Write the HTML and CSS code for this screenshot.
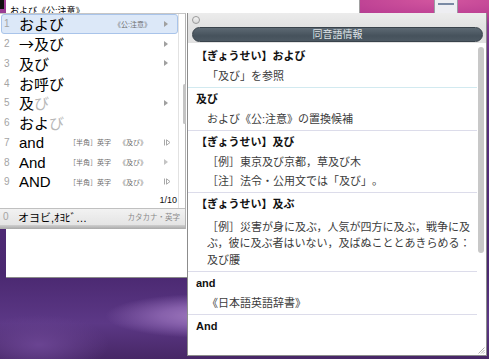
FILE: index.html
```html
<!DOCTYPE html>
<html lang="ja">
<head>
    <meta charset="UTF-8">
    <title>同音語情報</title>
    <link rel="stylesheet" href="styles.css">
</head>
<body>
<div class="desktop">
    <div class="desk-icon"><span></span></div>

    <div class="doc">
        <span class="inline-input">および《公:注意》</span>
    </div>
    <div class="caret"></div>

    <!-- candidate list -->
    <div class="cands">
        <div class="cand-body">
            <div class="cand-list">
                <div class="cand selected"><span class="num">1</span><span class="word">および</span><span class="note">《公:注意》</span><span class="more"><i class="tri"></i></span></div>
                <div class="cand"><span class="num">2</span><span class="word"><span class="cjk">→</span>及び</span><span class="more"><i class="tri"></i></span></div>
                <div class="cand"><span class="num">3</span><span class="word">及び</span><span class="more"><i class="tri"></i></span></div>
                <div class="cand"><span class="num">4</span><span class="word">お呼び</span></div>
                <div class="cand"><span class="num">5</span><span class="word">及<em>び</em></span><span class="more"><i class="tri"></i></span></div>
                <div class="cand"><span class="num">6</span><span class="word">およ<em>び</em></span></div>
                <div class="cand en"><span class="num">7</span><span class="word">and</span><span class="tag">［半角］英字</span><span class="tag">《及び》</span><span class="more"><svg width="7" height="7" viewBox="0 0 7 7"><path d="M0.5 0.5V6.5M2.5 0.8L6 3.5L2.5 6.2Z" fill="none" stroke="#a8a8a8"/></svg></span></div>
                <div class="cand en"><span class="num">8</span><span class="word">And</span><span class="tag">［半角］英字</span><span class="tag">《及び》</span><span class="more"><i class="tri light"></i></span></div>
                <div class="cand en"><span class="num">9</span><span class="word">AND</span><span class="tag">［半角］英字</span><span class="tag">《及び》</span><span class="more"><svg width="7" height="7" viewBox="0 0 7 7"><path d="M0.5 0.5V6.5M2.5 0.8L6 3.5L2.5 6.2Z" fill="none" stroke="#a8a8a8"/></svg></span></div>
                <div class="page">1/10</div>
            </div>
            <div class="cand-scroll"><span class="thumb"></span></div>
        </div>
        <div class="zero"><span class="num">0</span><span class="word">オヨビ,ｵﾖﾋﾞ…</span><span class="kind">カタカナ・英字</span></div>
        <div class="shade"></div>
    </div>

    <!-- homonym info window -->
    <div class="info">
        <div class="info-title"><span class="close"></span></div>
        <div class="info-head"><div class="pill">同音語情報</div></div>
        <div class="info-content">
            <div class="entries">
                <div class="entry first">
                    <div class="term">【ぎょうせい】および</div>
                    <div class="line">「及び」を参照</div>
                </div>
                <div class="entry">
                    <div class="term">及び</div>
                    <div class="line">および《公:注意》の置換候補</div>
                </div>
                <div class="entry">
                    <div class="term">【ぎょうせい】及び</div>
                    <div class="line">［例］東京及び京都，草及び木</div>
                    <div class="line">［注］法令・公用文では「及び」。</div>
                </div>
                <div class="entry">
                    <div class="term">【ぎょうせい】及ぶ</div>
                    <div class="line wrap">［例］災害が身に及ぶ，人気が四方に及ぶ，戦争に及<br>ぶ，彼に及ぶ者はいない，及ばぬこととあきらめる：</div>
                    <div class="line">及び腰</div>
                </div>
                <div class="entry">
                    <div class="term">and</div>
                    <div class="line">《日本語英語辞書》</div>
                </div>
                <div class="entry last">
                    <div class="term">And</div>
                </div>
            </div>
            <div class="info-scroll"><span class="thumb"></span></div>
        </div>
        <svg class="grip" width="7" height="7" viewBox="0 0 7 7"><path d="M6.5 0.5L0.5 6.5M6.5 3L3 6.5M6.5 5.3L5.3 6.5" stroke="#9a9a9a" stroke-width="0.8"/></svg>
    </div>
</div>
</body>
</html>
```

FILE: styles.css
```css
body {
    margin: 0;
    font-family: "Liberation Sans", "Noto Sans CJK JP", sans-serif;
    text-spacing-trim: space-all;
}
.desktop {
    position: relative;
    width: 489px;
    height: 359px;
    overflow: hidden;
    background:
        radial-gradient(ellipse 100px 22px at 42% 88%, #a07abf 0%, #8660ab 45%, transparent 100%),
        radial-gradient(ellipse 70px 30px at 8% 96%, #6a4492 0%, transparent 100%),
        radial-gradient(ellipse 160px 26px at 90% 0%, #d3569f 0%, #bc4093 60%, transparent 100%),
        linear-gradient(180deg, #a8409a 0%, #5a2e80 18%, #4a2870 76%, #5c3886 90%, #472766 100%);
}
.desk-icon {
    position: absolute;
    left: 434px;
    top: -3px;
    width: 22px;
    height: 15px;
    background: #eeeef2;
    border: 1px solid #9c9ca4;
}
.desk-icon span {
    display: block;
    margin: 5px 3px;
    height: 2px;
    background: #7a8aa4;
}

/* document window behind */
.doc {
    position: absolute;
    left: 6px;
    top: 0;
    width: 353px;
    height: 277px;
    background: #fff;
    border-right: 1px solid #a0a0a0;
    border-bottom: 1px solid #8a8a8a;
}
.inline-input {
    display: inline-block;
    margin-left: 4px;
    font-size: 9px;
    line-height: 9px;
    color: #000;
    border-bottom: 2px solid #000;
}
.caret {
    position: absolute;
    left: 0;
    top: 0;
    width: 4px;
    height: 9px;
    background: #111;
}

/* candidate panel */
.cands {
    position: absolute;
    left: 0;
    top: 13px;
    width: 186px;
    background: #fff;
    border-top: 1px solid #c6c6c6;
    border-right: 1px solid #b4b4b4;
    box-sizing: border-box;
}
.cand-body {
    display: flex;
    border-bottom: 1px solid #c0c0c0;
}
.cand-list {
    width: 178px;
}
.cand {
    display: flex;
    align-items: center;
    height: 19.75px;
    box-sizing: border-box;
    border: 1px solid transparent;
    margin-left: 1px;
}
.cand.selected {
    background: #dce8f8;
    border-color: #a9c4ea;
    border-radius: 3px;
}
.num {
    width: 17px;
    padding-left: 2px;
    box-sizing: border-box;
    font-size: 10px;
    color: #a4a4a4;
}
.word {
    font-size: 15px;
    color: #000;
    white-space: nowrap;
}
.word em {
    font-style: normal;
    color: #b8b8b8;
}
.cjk {
    font-family: "Noto Sans CJK JP", sans-serif;
}
.en .word {
    width: 50px;
}
.note, .tag {
    font-size: 7px;
    color: #6c6c6c;
    white-space: nowrap;
}
.note {
    margin-left: auto;
}
.en .tag {
    width: 50px;
}
.en .tag + .tag {
    width: 38px;
}
.more {
    margin-left: auto;
    width: 13px;
    display: flex;
    align-items: center;
}
.note + .more {
    margin-left: 13px;
}
.tri {
    display: block;
    width: 0;
    height: 0;
    border-top: 3px solid transparent;
    border-bottom: 3px solid transparent;
    border-left: 4px solid #a0a0a0;
}
.tri.light {
    border-left-color: #c4c4c4;
}
.page {
    height: 16px;
    line-height: 17px;
    text-align: right;
    font-size: 9px;
    color: #111;
    padding-right: 1px;
}
.cand-scroll {
    flex: 1;
    border-left: 1px solid #e2e2e2;
    position: relative;
}
.cand-scroll .thumb {
    position: absolute;
    left: 4px;
    top: 70px;
    width: 3px;
    height: 40px;
    background: #c4c4c4;
    border-radius: 2px;
}
.zero {
    display: flex;
    align-items: center;
    height: 16px;
    background: linear-gradient(#f2f2f2, #e4e4e4);
    padding-left: 1px;
}
.zero .word {
    font-size: 11px;
}
.kind {
    margin-left: auto;
    margin-right: 5px;
    font-size: 7.5px;
    color: #8a8a8a;
}
.shade {
    height: 4px;
    background: linear-gradient(#cfcfcf, #a9a9a9);
}

/* info window */
.info {
    position: absolute;
    left: 187px;
    top: 13px;
    width: 300px;
    height: 343px;
    box-sizing: border-box;
    border: 1px solid #8c8c8c;
    border-top: none;
    background: #fff;
    display: flex;
    flex-direction: column;
}
.info-title {
    height: 14px;
    background: linear-gradient(#ececec, #e2e2e2);
    display: flex;
    align-items: center;
    padding-left: 4px;
}
.close {
    width: 6px;
    height: 6px;
    border: 1px solid #9a9a9a;
    border-radius: 50%;
    background: linear-gradient(#f4f4f4, #d8d8d8);
}
.info-head {
    height: 16px;
    background: #e2e2e2;
    padding: 0 3px 1px 4px;
    box-sizing: border-box;
}
.pill {
    height: 15px;
    line-height: 13px;
    box-sizing: border-box;
    border: 1px solid #39434b;
    border-radius: 8px;
    background: linear-gradient(#5d6973, #46525c 60%, #4d5963);
    color: #dfe4e8;
    font-size: 10px;
    text-align: center;
}
.info-content {
    flex: 1;
    display: flex;
    min-height: 0;
}
.entries {
    flex: 1;
    padding-top: 2px;
}
.entry {
    padding: 1px 4px 1px 8px;
    border-bottom: 1px solid #dcdcea;
}
.entry.first {
    border-bottom-color: #d2eaf0;
}
.entry.last {
    border-bottom: none;
}
.term {
    font-size: 11px;
    line-height: 21px;
    font-weight: bold;
    color: #111;
}
.line {
    font-size: 11px;
    line-height: 19px;
    color: #3c3c3c;
    padding-left: 11px;
}
.line.wrap {
    line-height: 16px;
    padding-top: 4px;
}
.info-scroll {
    width: 9px;
    position: relative;
}
.info-scroll .thumb {
    position: absolute;
    left: 1px;
    top: 4px;
    width: 6px;
    height: 206px;
    background: #c8c8c8;
    border-radius: 3px;
}
.grip {
    position: absolute;
    right: 1px;
    bottom: 1px;
}
```
